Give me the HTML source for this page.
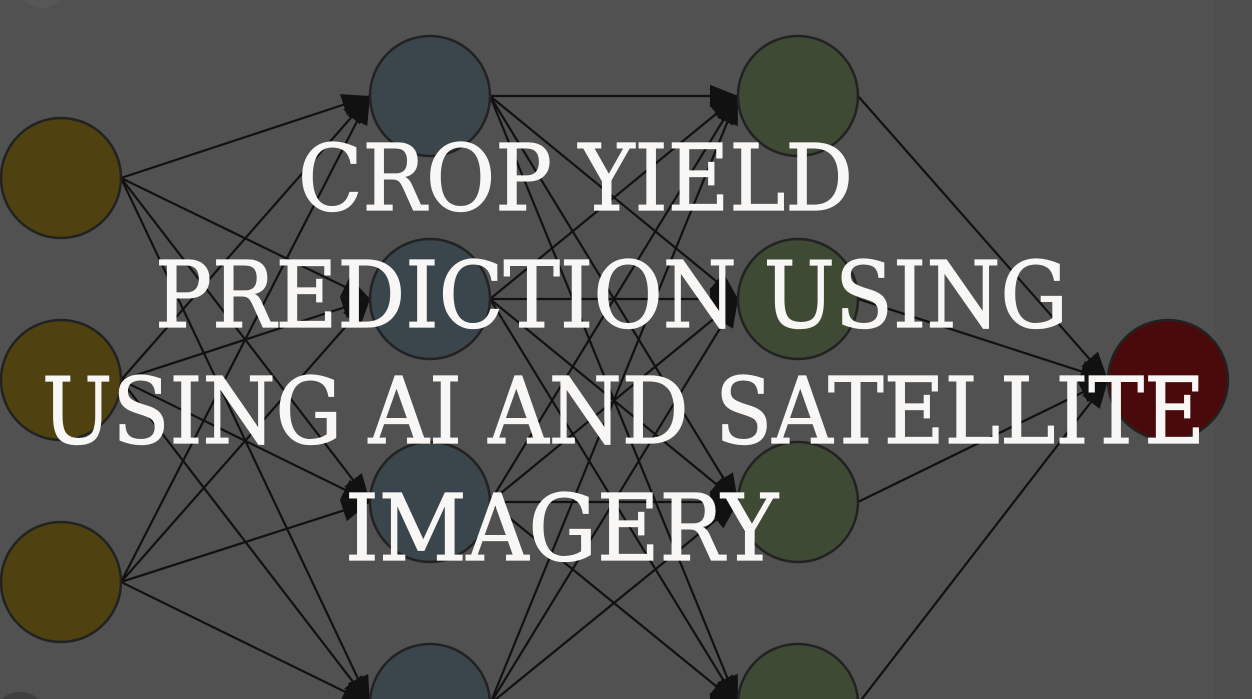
<!DOCTYPE html>
<html><head><meta charset="utf-8"><style>
html,body{margin:0;padding:0;background:#515151;width:1252px;height:699px;overflow:hidden;}
svg{display:block}
</style></head><body>
<svg width="1252" height="699" viewBox="0 0 1252 699" xmlns="http://www.w3.org/2000/svg">
<defs>
<marker id="m" viewBox="0 0 10 10" refX="10" refY="5" markerWidth="28" markerHeight="28" orient="auto" markerUnits="userSpaceOnUse"><path d="M0,1 L10,5 L0,9 Z" fill="#111"/></marker>
<clipPath id="c"><rect width="1252" height="699"/></clipPath>
</defs>
<g clip-path="url(#c)">
<rect width="1252" height="699" fill="#515151"/>
<rect x="1214" y="0" width="38" height="699" fill="#4e4e4e"/>
<circle cx="42" cy="-16" r="24" fill="#575757"/>
<circle cx="20" cy="720" r="28" fill="#3f3f3f"/>
<g stroke="#111" stroke-width="2.2" fill="none" marker-end="url(#m)">
<line x1="121" y1="178" x2="370" y2="96"/><line x1="121" y1="178" x2="370" y2="299"/><line x1="121" y1="178" x2="370" y2="502"/><line x1="121" y1="178" x2="370" y2="704"/>
<line x1="121" y1="380" x2="370" y2="96"/><line x1="121" y1="380" x2="370" y2="299"/><line x1="121" y1="380" x2="370" y2="502"/><line x1="121" y1="380" x2="370" y2="704"/>
<line x1="121" y1="582" x2="370" y2="96"/><line x1="121" y1="582" x2="370" y2="299"/><line x1="121" y1="582" x2="370" y2="502"/><line x1="121" y1="582" x2="370" y2="704"/>
<line x1="490" y1="96" x2="738" y2="96"/><line x1="490" y1="96" x2="738" y2="299"/><line x1="490" y1="96" x2="738" y2="502"/><line x1="490" y1="96" x2="738" y2="704"/>
<line x1="490" y1="299" x2="738" y2="96"/><line x1="490" y1="299" x2="738" y2="299"/><line x1="490" y1="299" x2="738" y2="502"/><line x1="490" y1="299" x2="738" y2="704"/>
<line x1="490" y1="502" x2="738" y2="96"/><line x1="490" y1="502" x2="738" y2="299"/><line x1="490" y1="502" x2="738" y2="502"/><line x1="490" y1="502" x2="738" y2="704"/>
<line x1="490" y1="704" x2="738" y2="96"/><line x1="490" y1="704" x2="738" y2="299"/><line x1="490" y1="704" x2="738" y2="502"/><line x1="490" y1="704" x2="738" y2="704"/>
<line x1="858" y1="96" x2="1108" y2="380"/><line x1="858" y1="299" x2="1108" y2="380"/><line x1="858" y1="502" x2="1108" y2="380"/><line x1="858" y1="704" x2="1108" y2="380"/>
</g>
<g stroke="#222" stroke-width="2.5">
<circle cx="61" cy="178" r="60" fill="#4f4210"/><circle cx="61" cy="380" r="60" fill="#4f4210"/><circle cx="61" cy="582" r="60" fill="#4f4210"/>
<circle cx="430" cy="96" r="60" fill="#3a464c"/><circle cx="430" cy="299" r="60" fill="#3a464c"/><circle cx="430" cy="502" r="60" fill="#3a464c"/><circle cx="430" cy="704" r="60" fill="#3a464c"/>
<circle cx="798" cy="96" r="60" fill="#3f4a35"/><circle cx="798" cy="299" r="60" fill="#3f4a35"/><circle cx="798" cy="502" r="60" fill="#3f4a35"/><circle cx="798" cy="704" r="60" fill="#3f4a35"/>
<circle cx="1168" cy="380" r="60" fill="#4a0a0b"/>
</g>
<g fill="#f8f7f5" stroke="#f8f7f5" stroke-width="1.3" font-family="DejaVu Serif, serif" font-size="92">
<text x="298" y="210" textLength="555" lengthAdjust="spacingAndGlyphs">CROP YIELD</text>
<text x="155" y="327" textLength="913" lengthAdjust="spacingAndGlyphs">PREDICTION USING</text>
<text x="42" y="443" textLength="1163" lengthAdjust="spacingAndGlyphs">USING AI AND SATELLITE</text>
<text x="345" y="560" textLength="433" lengthAdjust="spacingAndGlyphs">IMAGERY</text>
</g>
</g>
</svg>
</body></html>
